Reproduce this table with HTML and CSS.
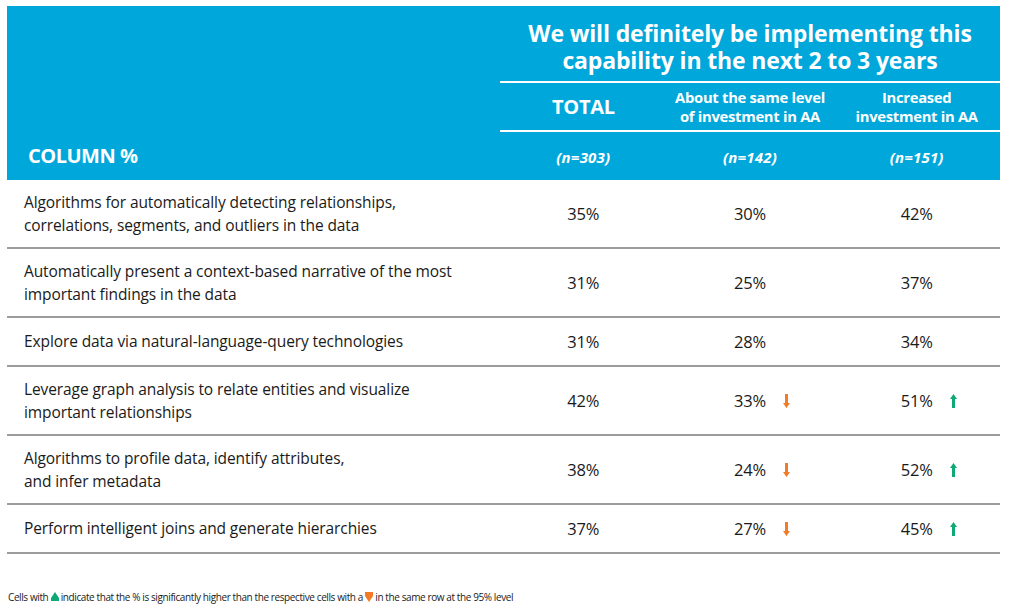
FILE: index.html
```html
<!DOCTYPE html>
<html>
<head>
<meta charset="utf-8">
<link rel="stylesheet" href="styles.css">
</head>
<body>
<div class="page">
  <div class="head">
    <div class="head-left"><span class="colpct">COLUMN %</span></div>
    <div class="head-right">
      <div class="title"><div>We will definitely be implementing this</div><div>capability in the next 2 to 3 years</div></div>
      <div class="subs">
        <div class="sub total">TOTAL</div>
        <div class="sub">About the same level<br>of investment in AA</div>
        <div class="sub">Increased<br>investment in AA</div>
      </div>
      <div class="ns">
        <div class="n">(n=303)</div>
        <div class="n">(n=142)</div>
        <div class="n">(n=151)</div>
      </div>
    </div>
  </div>

  <div class="row tall">
    <div class="label">Algorithms for automatically detecting relationships,<br>correlations, segments, and outliers in the data</div>
    <div class="val">35%</div>
    <div class="val">30%</div>
    <div class="val">42%</div>
  </div>
  <div class="row tall">
    <div class="label">Automatically present a context-based narrative of the most<br>important findings in the data</div>
    <div class="val">31%</div>
    <div class="val">25%</div>
    <div class="val">37%</div>
  </div>
  <div class="row short">
    <div class="label">Explore data via natural-language-query technologies</div>
    <div class="val">31%</div>
    <div class="val">28%</div>
    <div class="val">34%</div>
  </div>
  <div class="row tall">
    <div class="label">Leverage graph analysis to relate entities and visualize<br>important relationships</div>
    <div class="val">42%</div>
    <div class="val">33%<span class="arrow"><svg width="7" height="14" viewBox="0 0 7 14"><path d="M2 0h3v9h2l-3.5 5L0 9h2z" fill="#f47a25"/></svg></span></div>
    <div class="val">51%<span class="arrow"><svg width="7" height="14" viewBox="0 0 7 14"><path d="M2 14h3V5h2L3.5 0 0 5h2z" fill="#0fa978"/></svg></span></div>
  </div>
  <div class="row tall">
    <div class="label">Algorithms to profile data, identify attributes,<br>and infer metadata</div>
    <div class="val">38%</div>
    <div class="val">24%<span class="arrow"><svg width="7" height="14" viewBox="0 0 7 14"><path d="M2 0h3v9h2l-3.5 5L0 9h2z" fill="#f47a25"/></svg></span></div>
    <div class="val">52%<span class="arrow"><svg width="7" height="14" viewBox="0 0 7 14"><path d="M2 14h3V5h2L3.5 0 0 5h2z" fill="#0fa978"/></svg></span></div>
  </div>
  <div class="row short">
    <div class="label">Perform intelligent joins and generate hierarchies</div>
    <div class="val">37%</div>
    <div class="val">27%<span class="arrow"><svg width="7" height="14" viewBox="0 0 7 14"><path d="M2 0h3v9h2l-3.5 5L0 9h2z" fill="#f47a25"/></svg></span></div>
    <div class="val">45%<span class="arrow"><svg width="7" height="14" viewBox="0 0 7 14"><path d="M2 14h3V5h2L3.5 0 0 5h2z" fill="#0fa978"/></svg></span></div>
  </div>

  <div class="note">Cells with <svg class="mini" width="8" height="10" viewBox="0 0 8 10"><path d="M4 0L8 6v3H0V6z" fill="#0fa978"/></svg> indicate that the % is significantly higher than the respective cells with a <svg class="mini" width="8" height="10" viewBox="0 0 8 10"><path d="M0 0h8v4L4 10 0 4z" fill="#f47a25"/></svg> in the same row at the 95% level</div>
</div>
</body>
</html>
```
FILE: styles.css
```css
html, body {
  margin: 0;
  padding: 0;
  background: #ffffff;
}
.page {
  width: 993px;
  margin: 6px 0 0 7px;
  font-family: "Open Sans", "Noto Sans", sans-serif;
  color: #1a1a1a;
}
.head {
  background: #00a7db;
  display: grid;
  grid-template-columns: 493px 500px;
  height: 174px;
  color: #ffffff;
}
.head-left {
  display: flex;
  align-items: flex-end;
  padding: 0 0 11px 21px;
}
.colpct {
  font-weight: 700;
  font-size: 20px;
  letter-spacing: -0.5px;
}
.head-right {
  display: flex;
  flex-direction: column;
}
.title {
  height: 77px;
  box-sizing: border-box;
  padding-top: 14px;
  text-align: center;
  font-weight: 700;
  font-size: 23px;
  line-height: 27px;
  letter-spacing: -0.15px;
  border-bottom: 2px solid #ffffff;
}
.title div {
  height: 27px;
  overflow: visible;
}
.subs {
  height: 49px;
  box-sizing: border-box;
  display: grid;
  grid-template-columns: repeat(3, 1fr);
  border-bottom: 2px solid #ffffff;
}
.sub {
  display: flex;
  align-items: center;
  justify-content: center;
  text-align: center;
  font-weight: 700;
  font-size: 14.8px;
  line-height: 19px;
  letter-spacing: -0.3px;
}
.sub.total {
  font-size: 20px;
}
.ns {
  flex: 1;
  display: grid;
  grid-template-columns: repeat(3, 1fr);
  align-items: center;
}
.n {
  text-align: center;
  font-weight: 700;
  font-style: italic;
  font-size: 15px;
  letter-spacing: 0.2px;
  padding-top: 2px;
}
.row {
  display: grid;
  grid-template-columns: 493px repeat(3, 1fr);
  border-bottom: 2px solid #9c9c9c;
  align-items: center;
}
.row.tall { height: 67px; }
.row.short { height: 47px; }
.label {
  padding-left: 17px;
  font-size: 15.5px;
  line-height: 23px;
  letter-spacing: -0.1px;
}
.val {
  position: relative;
  text-align: center;
  font-size: 16.5px;
  letter-spacing: -0.2px;
}
.arrow {
  position: absolute;
  left: 50%;
  margin-left: 33px;
  top: 5px;
  line-height: 0;
}
.note {
  margin-top: 36px;
  margin-left: 1px;
  font-size: 10px;
  letter-spacing: -0.4px;
  color: #1a1a1a;
}
.mini {
  vertical-align: -1px;
}
```
